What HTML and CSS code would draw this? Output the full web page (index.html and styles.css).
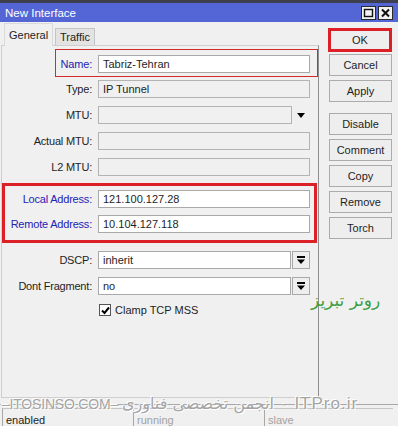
FILE: index.html
```html
<!DOCTYPE html>
<html lang="en">
<head>
    <meta charset="UTF-8">
    <meta name="viewport" content="width=device-width, initial-scale=1.0">
    <title>New Interface</title>
    <link rel="stylesheet" href="styles.css">
</head>
<body>
    <div class="window">
        <div class="titlebar">
            <span class="title">New Interface</span>
            <div class="title-btns">
                <span class="tbtn">
                    <svg width="11" height="10" viewBox="0 0 11 10"><rect x="1.5" y="1.5" width="8" height="7" fill="none" stroke="#111" stroke-width="1.4"/></svg>
                </span>
                <span class="tbtn">
                    <svg width="11" height="10" viewBox="0 0 11 10"><path d="M2 1.5 L9 8.5 M9 1.5 L2 8.5" stroke="#111" stroke-width="2"/></svg>
                </span>
            </div>
        </div>

        <div class="main">
            <div class="left">
                <div class="tabs">
                    <div class="tab active">General</div>
                    <div class="tab">Traffic</div>
                </div>
                <div class="panel">
                    <div class="hl hl-name">
                        <div class="row">
                            <label class="lbl blue">Name:</label>
                            <div class="field">Tabriz-Tehran</div>
                        </div>
                    </div>
                    <div class="row after-name">
                        <label class="lbl">Type:</label>
                        <div class="field ro">IP Tunnel</div>
                    </div>
                    <div class="row">
                        <label class="lbl">MTU:</label>
                        <div class="field ro short"></div>
                        <span class="arrow"></span>
                    </div>
                    <div class="row">
                        <label class="lbl">Actual MTU:</label>
                        <div class="field ro"></div>
                    </div>
                    <div class="row">
                        <label class="lbl">L2 MTU:</label>
                        <div class="field ro"></div>
                    </div>
                    <div class="hl hl-addr">
                        <div class="row">
                            <label class="lbl blue">Local Address:</label>
                            <div class="field">121.100.127.28</div>
                        </div>
                        <div class="row">
                            <label class="lbl blue">Remote Address:</label>
                            <div class="field">10.104.127.118</div>
                        </div>
                    </div>
                    <div class="row after-addr">
                        <label class="lbl">DSCP:</label>
                        <div class="field combo">inherit</div>
                        <span class="dd">
                            <svg width="10" height="9" viewBox="0 0 10 9"><rect x="1" y="0" width="8" height="2" fill="#000"/><path d="M1 3.5 H9 L5 8 Z" fill="#000"/></svg>
                        </span>
                    </div>
                    <div class="row">
                        <label class="lbl">Dont Fragment:</label>
                        <div class="field combo">no</div>
                        <span class="dd">
                            <svg width="10" height="9" viewBox="0 0 10 9"><rect x="1" y="0" width="8" height="2" fill="#000"/><path d="M1 3.5 H9 L5 8 Z" fill="#000"/></svg>
                        </span>
                    </div>
                    <div class="row check-row">
                        <span class="checkbox">
                            <svg width="9" height="9" viewBox="0 0 9 9"><path d="M1 4.5 L3.5 7 L8 1.5" fill="none" stroke="#000" stroke-width="2"/></svg>
                        </span>
                        <span>Clamp TCP MSS</span>
                    </div>
                </div>
            </div>

            <div class="buttons">
                <div class="btn ok">OK</div>
                <div class="btn cancel">Cancel</div>
                <div class="btn">Apply</div>
                <div class="btn spaced">Disable</div>
                <div class="btn">Comment</div>
                <div class="btn">Copy</div>
                <div class="btn">Remove</div>
                <div class="btn">Torch</div>
            </div>
        </div>

        <div class="statusbar">
            <div class="cell">enabled</div>
            <div class="cell dim">running</div>
            <div class="cell dim">slave</div>
        </div>

        <div class="note">روتر تبریز</div>
        <div class="watermark">
            <span class="wm-site">‒ITOSINSO.COM‒</span>
            <span class="wm-fa">انجمن تخصصی فناوری</span>
            <span class="wm-site2">- ITPro.ir</span>
        </div>
    </div>
</body>
</html>
```

FILE: styles.css
```css
body {
    margin: 0;
    background-color: #f0f0f0;
    font-family: "Liberation Sans", Arial, sans-serif;
    font-size: 11px;
    color: #1e1e1e;
}
.window {
    position: relative;
    width: 398px;
    height: 426px;
    overflow: hidden;
}
.titlebar {
    height: 19px;
    border-top: 3px solid #3d3f4c;
    background-color: #5465d6;
    display: flex;
    align-items: center;
    justify-content: space-between;
    padding: 0 5px 0 5px;
    color: #fff;
    font-size: 11.5px;
}
.title-btns {
    display: flex;
    gap: 2px;
    padding-top: 1px;
}
.tbtn {
    width: 13px;
    height: 12px;
    background-color: #f2f2f2;
    border: 1px solid #2a2a2a;
    display: flex;
    align-items: center;
    justify-content: center;
}
.main {
    display: flex;
    align-items: flex-start;
}
.left {
    width: 318px;
    margin-left: 1px;
}
.tabs {
    display: flex;
    align-items: flex-end;
    height: 23px;
    padding-left: 3px;
}
.tab {
    box-sizing: border-box;
    height: 17px;
    line-height: 16px;
    padding: 0 4px;
    margin-left: 2px;
    border: 1px solid #c4c4c4;
    border-bottom: none;
    background-color: #e3e3e3;
}
.tab.active {
    width: 49px;
    height: 23px;
    line-height: 22px;
    margin-left: 0;
    margin-bottom: -1px;
    position: relative;
    text-align: center;
    background-color: #f0f0f0;
    border-color: #dadada;
}
.panel {
    height: 351px;
    border: 1px solid #cfcfcf;
    border-right-color: #8e8e8e;
}
.row {
    display: flex;
    align-items: center;
    height: 18px;
    margin-top: 8px;
}
.lbl {
    box-sizing: border-box;
    width: 96px;
    padding-right: 6px;
    text-align: right;
    white-space: nowrap;
    letter-spacing: -0.2px;
}
.blue {
    color: #2323b4;
}
.field {
    box-sizing: border-box;
    width: 212px;
    height: 18px;
    line-height: 16px;
    padding-left: 4px;
    background-color: #fff;
    border: 1px solid #a9a9a9;
}
.field.ro {
    background-color: #f0f0f0;
    border-color: #b4b4b4;
}
.field.short {
    width: 194px;
}
.field.combo {
    width: 193px;
}
.arrow {
    margin-left: 5px;
    width: 0;
    height: 0;
    border-left: 4px solid transparent;
    border-right: 4px solid transparent;
    border-top: 5px solid #000;
}
.dd {
    box-sizing: border-box;
    width: 18px;
    height: 18px;
    margin-left: 1px;
    border: 1px solid #a9a9a9;
    background-color: #eeeeee;
    display: flex;
    align-items: center;
    justify-content: center;
}
.hl .row:first-child {
    margin-top: 0;
}
.hl-name {
    margin: 3px 0 0 53px;
    border: 1px solid #d32a2a;
    padding: 5px 7px 3px 0;
}
.hl-name .lbl {
    width: 42px;
}
.row.after-name {
    margin-top: 3px;
}
.hl-addr {
    margin: 7px 1px 0 0;
    border: 3px solid #dc2028;
    padding: 4px 4px 7px 0;
}
.hl-addr .row {
    margin-top: 7px;
}
.hl-addr .lbl {
    width: 93px;
}
.row.after-addr {
    margin-top: 8px;
}
.check-row {
    margin-top: 7px;
    height: 16px;
    padding-left: 97px;
}
.checkbox {
    box-sizing: border-box;
    width: 12px;
    height: 12px;
    margin-right: 4px;
    border: 1px solid #555;
    background-color: #fff;
    display: flex;
    align-items: center;
    justify-content: center;
}
.buttons {
    width: 63px;
    margin: 6px 0 0 10px;
}
.btn {
    box-sizing: border-box;
    height: 22px;
    line-height: 20px;
    margin-top: 4px;
    text-align: center;
    border: 1px solid #acacac;
    background-color: #eeeeee;
}
.btn.ok {
    width: 64px;
    height: 24px;
    margin: 0 0 0 -1px;
    border: 3px solid #dc2028;
    line-height: 18px;
}
.btn.cancel {
    margin-top: 2px;
}
.btn.spaced {
    margin-top: 11px;
}
.statusbar {
    display: flex;
    gap: 2px;
    margin-top: 6px;
    padding: 3px 0 0 2px;
    border-top: 1px solid #a8a8a8;
}
.cell {
    box-sizing: border-box;
    width: 129px;
    height: 22px;
    line-height: 22px;
    padding-left: 3px;
    border-left: 1px solid #a8a8a8;
    border-top: 1px solid #c6c6c6;
}
.cell.dim {
    color: #a2a2a2;
}
.note {
    position: absolute;
    left: 311px;
    top: 290px;
    direction: rtl;
    font-family: "DejaVu Sans", sans-serif;
    font-size: 17px;
    color: #3f9e45;
}
.watermark {
    position: absolute;
    left: 2px;
    top: 394px;
    width: 396px;
    display: flex;
    align-items: baseline;
    white-space: nowrap;
    color: #a4a4a4;
    text-shadow: 1px 1px 0 #fff, -1px -1px 0 #fff;
    font-size: 14px;
}
.wm-site {
    letter-spacing: -0.2px;
}
.wm-fa {
    margin-left: 4px;
    font-family: "DejaVu Sans", sans-serif;
    font-size: 16px;
    direction: rtl;
}
.wm-site2 {
    margin-left: 8px;
    font-size: 17px;
    letter-spacing: 1px;
}
```
